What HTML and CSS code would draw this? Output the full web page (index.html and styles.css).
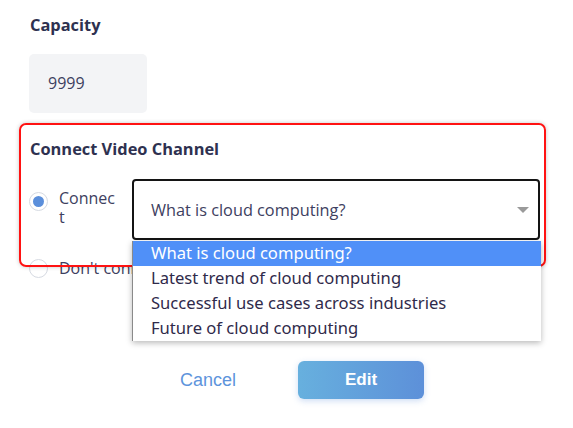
FILE: index.html
```html
<!DOCTYPE html>
<html lang="en">
<head>
<meta charset="utf-8">
<title>Edit</title>
<link rel="stylesheet" href="styles.css">
</head>
<body>
<div class="page">
  <div class="field-label">Capacity</div>
  <div class="input-box">9999</div>

  <div class="section-title">Connect Video Channel</div>

  <div class="option-row first">
    <span class="radio checked"></span>
    <span class="option-label">Connect</span>
    <div class="select-wrap">
      <div class="select">
        <span class="select-text">What is cloud computing?</span>
        <span class="caret"></span>
      </div>
      <ul class="menu">
        <li class="menu-item active">What is cloud computing?</li>
        <li class="menu-item">Latest trend of cloud computing</li>
        <li class="menu-item">Successful use cases across industries</li>
        <li class="menu-item">Future of cloud computing</li>
      </ul>
    </div>
  </div>

  <div class="option-row second">
    <span class="radio"></span>
    <span class="option-label nowrap">Don't connect</span>
  </div>

  <div class="actions">
    <button class="btn-cancel">Cancel</button>
    <button class="btn-edit">Edit</button>
  </div>

  <div class="highlight"></div>
</div>
</body>
</html>
```

FILE: styles.css
```css
* { box-sizing: border-box; }
html, body {
  margin: 0;
  padding: 0;
  background: #ffffff;
}
.page {
  position: relative;
  width: 573px;
  height: 428px;
  padding: 15px 0 0 29px;
  font-family: "Open Sans", "Noto Sans", sans-serif;
  color: #3d4060;
  overflow: hidden;
}
.field-label {
  font-family: "Open Sans", Inter, sans-serif;
  font-weight: 700;
  font-size: 16.4px;
  line-height: 20px;
  color: #2e3150;
  padding-left: 1px;
}
.input-box {
  margin-top: 19px;
  width: 118px;
  height: 59px;
  background: #f3f4f6;
  border-radius: 5px;
  padding-left: 19px;
  font-size: 16px;
  line-height: 59px;
  color: #3d4060;
}
.section-title {
  margin-top: 26px;
  font-family: "Open Sans", Inter, sans-serif;
  font-weight: 700;
  font-size: 16.4px;
  line-height: 20px;
  color: #2e3150;
  padding-left: 1px;
}
.option-row {
  display: flex;
  align-items: flex-start;
}
.option-row.first {
  margin-top: 20px;
}
.option-row.second {
  margin-top: 19px;
}
.radio {
  flex: none;
  width: 19px;
  height: 19px;
  border-radius: 50%;
  border: 1px solid #d6dae2;
  background: #fff;
  position: relative;
}
.option-row.first .radio { margin-top: 13px; }
.radio.checked::after {
  content: "";
  position: absolute;
  left: 3px;
  top: 3px;
  width: 11px;
  height: 11px;
  border-radius: 50%;
  background: #5b8fdb;
}
.option-label {
  width: 58px;
  margin-left: 11px;
  font-size: 16px;
  line-height: 19px;
  color: #3d4060;
  word-break: break-all;
}
.option-row.first .option-label { margin-top: 10px; }
.option-label.nowrap {
  width: auto;
  white-space: nowrap;
}
.select-wrap {
  position: relative;
  margin-left: 15px;
  width: 408px;
}
.select {
  height: 61px;
  border: 2px solid #141414;
  border-radius: 4px;
  background: #fff;
  display: flex;
  align-items: center;
  padding: 0 9px 0 17px;
}
.select-text {
  flex: 1;
  font-size: 16.3px;
  color: #3d4060;
}
.caret {
  width: 0;
  height: 0;
  border-left: 6px solid transparent;
  border-right: 6px solid transparent;
  border-top: 6px solid #9a9a9a;
}
.menu {
  position: absolute;
  z-index: 5;
  left: 0;
  top: 62px;
  width: 409px;
  margin: 0;
  padding: 0;
  list-style: none;
  background: #fff;
  border-left: 1px solid #8a8a8a;
  box-shadow: 0 2px 6px rgba(0, 0, 0, 0.28);
}
.menu-item {
  height: 25px;
  line-height: 24px;
  padding-left: 18px;
  font-family: "Noto Sans", "Open Sans", sans-serif;
  font-size: 16.6px;
  color: #2f2a4a;
}
.menu-item.active {
  background: #5090f8;
  color: #fff;
}
.actions {
  display: flex;
  align-items: center;
  margin-top: 83px;
  padding-left: 151px;
}
.btn-cancel {
  border: none;
  background: none;
  padding: 0;
  font-family: "Liberation Sans", Arial, sans-serif;
  font-size: 18px;
  color: #5d94dc;
}
.btn-edit {
  margin-left: 62px;
  width: 126px;
  height: 38px;
  border: none;
  border-radius: 6px;
  background: linear-gradient(90deg, #67b0de 0%, #5d90d9 100%);
  box-shadow: 0 2px 6px rgba(93, 144, 217, 0.3);
  color: #fff;
  font-family: "Liberation Sans", Arial, sans-serif;
  font-weight: 700;
  font-size: 17px;
}
.highlight {
  position: absolute;
  z-index: 3;
  left: 19px;
  top: 123px;
  width: 527px;
  height: 144px;
  border: 2px solid #ff1212;
  border-radius: 7px;
  box-shadow: 0 0 4px rgba(0, 0, 0, 0.22);
  pointer-events: none;
}
```
